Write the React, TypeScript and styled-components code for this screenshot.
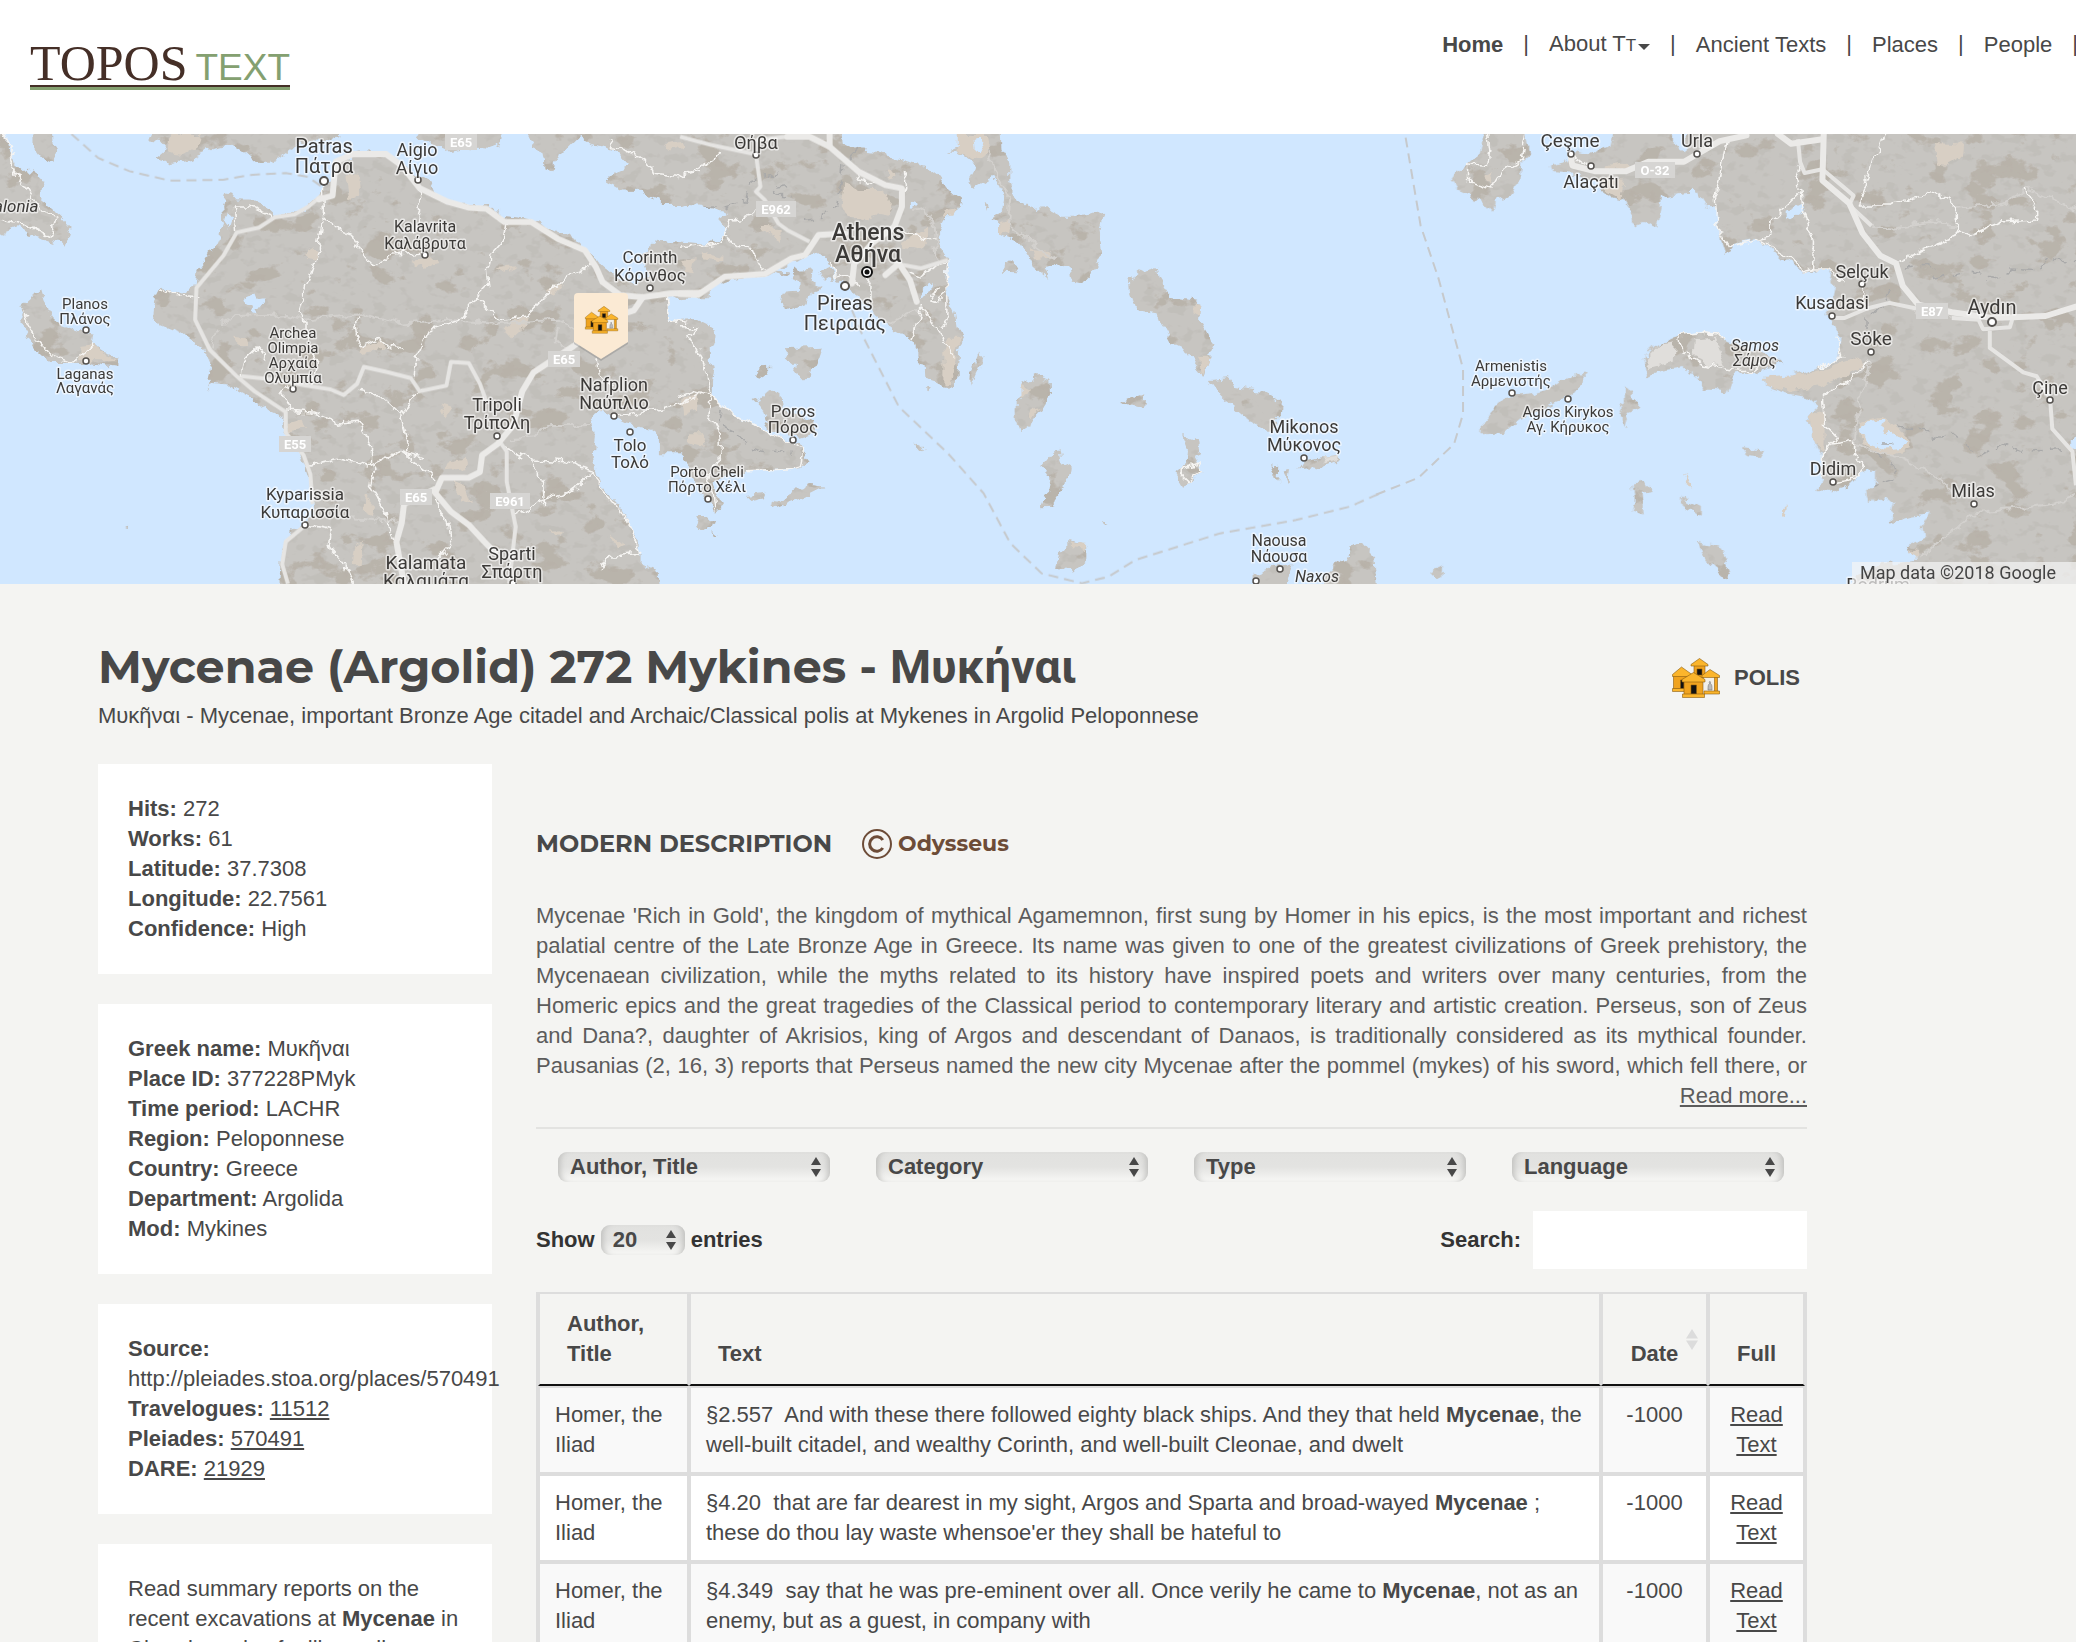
import React from "react";
import styled, { createGlobalStyle, css } from "styled-components";

const sans = `"Liberation Sans", Arial, Helvetica, sans-serif`;
const display = `Montserrat, Inter, "Liberation Sans", sans-serif`;
const ink = "#484848";

const GlobalStyle = createGlobalStyle`
  *, *::before, *::after { box-sizing: border-box; }
  body {
    margin: 0;
    background: #f4f4f2;
    color: ${ink};
    font: 22px/30px ${sans};
    overflow-x: hidden;
  }
  a { color: inherit; }
`;

/* ---------- header ---------- */

const Header = styled.header`
  display: flex;
  justify-content: space-between;
  align-items: flex-start;
  height: 134px;
  padding-left: 30px;
  background: #fff;
`;

const Logo = styled.a`
  display: flex;
  align-items: baseline;
  justify-content: space-between;
  width: 260px;
  height: 50px;
  margin-top: 40px;
  border-bottom: 3px solid #84a070;
  box-shadow: inset 0 -2px 0 #452f27;
  text-decoration: none;
  white-space: nowrap;
`;

const LogoTopos = styled.span`
  color: #452f27;
  font: 50px/46px "Liberation Serif", "Times New Roman", serif;
`;

const LogoText = styled.span`
  color: #84a070;
  font: 37px/40px ${sans};
`;

const Nav = styled.nav`
  display: flex;
  flex: none;
  gap: 20px;
  margin-right: -2px;
  padding-top: 29px;
  white-space: nowrap;
`;

const NavLink = styled.a<{ $active?: boolean }>`
  display: inline-flex;
  align-items: center;
  gap: 2px;
  color: ${ink};
  font-weight: ${(p) => (p.$active ? 700 : 400)};
  text-decoration: none;
`;

const Small = styled.span`
  font-size: 17px;
`;

const Caret = styled.span`
  border: 6px solid transparent;
  border-top-color: ${ink};
  border-bottom: 0;
  margin-top: 4px;
`;

/* ---------- map ---------- */

const MapBox = styled.section`
  position: relative;
  height: 450px;
  overflow: hidden;
  background: #d0e7ff;
`;

const MapDrawing = styled.svg`
  display: block;
  width: 100%;
  height: 100%;
`;

const MapCredit = styled.div`
  position: absolute;
  right: 0;
  bottom: 0;
  padding: 0 20px 0 8px;
  background: rgba(245, 245, 245, 0.7);
  color: #444;
  font: 18px/22px Roboto, sans-serif;
`;

/* ---------- page ---------- */

const Page = styled.main`
  max-width: 1807px;
  padding: 56px 0 60px 98px;
`;

const TitleRow = styled.div`
  display: flex;
  justify-content: space-between;
  align-items: flex-start;
  margin-bottom: 33px;
`;

const Title = styled.h1`
  margin: 0 0 7px;
  font: 700 46px/54px ${display};
`;

const GreekTitle = styled.span`
  font-family: Roboto, sans-serif;
  font-size: 47px;
`;

const Subtitle = styled.p`
  margin: 0;
`;

const Kind = styled.div`
  display: flex;
  align-items: center;
  gap: 14px;
  padding: 18px 7px 0 0;
  font-weight: 700;
`;

const Columns = styled.div`
  display: grid;
  grid-template-columns: 394px minmax(0, 1fr);
  gap: 44px;
`;

const Sidebar = styled.aside`
  display: flex;
  flex-direction: column;
  gap: 30px;
`;

const Card = styled.section`
  padding: 30px;
  background: #fff;
`;

const Fact = styled.div``;

const Content = styled.section`
  padding-top: 60px;
`;

const Heading = styled.h2`
  display: flex;
  align-items: center;
  gap: 30px;
  margin: 0 0 37px;
  font: 700 24px/40px ${display};
`;

const Credit = styled.a`
  display: flex;
  align-items: center;
  gap: 6px;
  color: #6d4c38;
  font-size: 22px;
  text-decoration: none;
`;

const Description = styled.p`
  margin: 0;
  color: #5c5c5c;
  text-align: justify;
  text-align-last: justify;
`;

const MoreLine = styled.div`
  padding-bottom: 16px;
  border-bottom: 2px solid #e3e3e1;
  color: #5c5c5c;
  text-align: right;
`;

const DescriptionLine = styled.span`
  display: block;
`;

const Filters = styled.div`
  display: grid;
  grid-template-columns: repeat(4, 1fr);
  gap: 46px;
  padding: 23px 23px 29px 22px;
`;

const SelectWrap = styled.span<{ $narrow?: boolean }>`
  position: relative;
  display: block;
  ${(p) => p.$narrow && css`width: 84px;`}
  svg {
    position: absolute;
    top: 5px;
    right: 9px;
    pointer-events: none;
  }
`;

const Select = styled.select`
  appearance: none;
  display: block;
  width: 100%;
  height: 30px;
  padding: 0 24px 0 12px;
  border: 0;
  border-radius: 9px;
  background: linear-gradient(#e1e1df 0, #e3e3e1 50%, #f4f4f2 90%);
  box-shadow: inset 7px 0 6px -5px #bdbdbb, inset -7px 0 6px -5px #bdbdbb;
  color: ${ink};
  font: 700 22px/28px ${sans};
`;

const Tools = styled.div`
  display: flex;
  justify-content: space-between;
  align-items: center;
  margin-bottom: 23px;
  color: #333;
  font-weight: 700;
`;

const ToolLabel = styled.label<{ $gap: number }>`
  display: flex;
  align-items: center;
  gap: ${(p) => p.$gap}px;
`;

const SearchInput = styled.input`
  width: 274px;
  height: 58px;
  padding: 0 15px;
  border: 0;
  background: #fff;
  color: ${ink};
  font: inherit;
`;

const Table = styled.table`
  width: 100%;
  table-layout: fixed;
  border: 2px solid #ddd;
  border-collapse: separate;
  border-spacing: 0;
`;

const Col = styled.col<{ $width?: number }>`
  ${(p) => p.$width && css`width: ${p.$width}px;`}
`;

const Th = styled.th<{ $center?: boolean }>`
  position: relative;
  padding: 15px ${(p) => (p.$center ? 15 : 27)}px;
  border: 2px solid #ddd;
  border-top: 0;
  border-bottom-color: #111;
  text-align: ${(p) => (p.$center ? "center" : "left")};
  vertical-align: bottom;
  svg {
    position: absolute;
    top: 35px;
    right: 8px;
  }
`;

const Td = styled.td<{ $center?: boolean }>`
  padding: 12px ${(p) => (p.$center ? 12 : 15)}px;
  border: 2px solid #ddd;
  text-align: ${(p) => (p.$center ? "center" : "left")};
  vertical-align: top;
`;

const Row = styled.tr`
  background: #fff;
  &:nth-child(odd) { background: #f9f9f9; }
`;

/* ---------- icons ---------- */

function CityShapes() {
  return (
    <g stroke="#8a5c10" strokeWidth="0.6" strokeLinejoin="round">
      <path d="M22 7H33V20H22Z" fill="#f0a31f" />
      <path d="M27.500 0.500L36 6.500V8H19V6.500Z" fill="#fbb52c" />
      <path d="M25 11H30V17H25Z" fill="#111" />
      <path d="M1.500 17H18V31H1.500Z" fill="#f0a31f" />
      <path d="M9.500 9L20 16.500V18.500H0.500V16.500Z" fill="#fbb52c" />
      <path d="M8.500 22H12V31H8.500Z" fill="#111" />
      <path d="M0.500 30.500H13V33.500H0.500Z" fill="#fbb52c" />
      <path d="M32 19H46V34H32Z" fill="#f2f0ea" stroke="none" />
      <path d="M36 32C36 28 36 27 37.500 25.500C36.500 23 39 22.500 38.500 25.500C40 27 40 28 40 32Z" fill="#bbb" stroke="#777" />
      <path d="M42.500 19H45.500V34H42.500Z" fill="#f0a31f" />
      <path d="M38 11.500L47.500 17.500V19.500H30V17.500Z" fill="#fbb52c" />
      <path d="M32 33H47.500V36H32Z" fill="#fbb52c" />
      <path d="M12 22H31V36.500H12Z" fill="#f0a31f" />
      <path d="M21.500 14.500L33 21.500V24H10V21.500Z" fill="#fbb52c" />
      <path d="M19 27H24.500V36H19Z" fill="#111" />
      <path d="M10.500 36H32.500V39.500H10.500Z" fill="#fbb52c" />
    </g>
  );
}

const UpDown = () => (
  <svg width="10" height="20" viewBox="0 0 10 20" fill={ink} aria-hidden="true">
    <path d="M5 0L10 8H0ZM0 12H10L5 20Z" />
  </svg>
);

const SortIcon = () => (
  <svg width="12" height="21" viewBox="0 0 12 21" fill="#dcdcdc" aria-hidden="true">
    <path d="M6 0L12 9.500H0ZM0 11.500H12L6 21Z" />
  </svg>
);

/* ---------- map data ---------- */

const WEST = "matrix(0.4464 0 0 0.3762 0 -134)";
const MIDDLE = "matrix(0.4464 0 0 0.3333 680 -14)";
const EAST = "matrix(0.4464 0 0 0.3762 1376 -134)";

type Region = { at: string; paths: string[] };

const land: Region[] = [
  {
    at: WEST,
    paths: [
      "M-20 340L10 356 18 380 28 430 60 465 72 450 95 490 90 530 130 570 158 605 145 655 120 645 80 630 40 605 -20 630Z",
      "M75 340L118 340 120 385 128 400 115 430 95 420 75 385Z",
      "M340 340L760 340 765 362 740 378 690 372 655 390 640 405 605 430 575 430 550 405 520 385 480 395 430 420 380 432 350 420 375 395 360 375 330 370Z",
      "M930 340L1130 340 1120 385 1090 398 1040 392 1000 400 970 385 940 370Z",
      "M1175 340L1590 340 1590 545 1500 540 1440 510 1400 510 1355 480 1380 455 1410 440 1380 400 1320 380 1300 365 1275 395 1250 410 1240 450 1220 445 1215 400 1195 390Z",
      "M45 850L55 810 90 772 98 800 130 860 190 885 215 890 210 915 265 955 265 975 200 965 110 965 80 930 50 870Z",
      "M505 512L520 515 530 530 565 530 590 545 620 575 660 568 690 550 715 520 728 490 745 470 748 440 770 415 830 405 870 410 900 430 925 460 960 480 975 515 1000 540 1050 545 1100 545 1130 575 1190 582 1230 605 1290 635 1330 680 1345 705 1380 740 1430 755 1450 730 1435 680 1480 635 1590 650 1590 790 1495 790 1500 855 1590 862 1590 1205 1510 1200 1495 1170 1460 1140 1400 1125 1375 1110 1340 1090 1325 1110 1335 1160 1330 1210 1340 1260 1350 1300 1390 1350 1410 1400 1435 1440 1435 1500 1470 1520 1475 1570 625 1570 630 1460 650 1420 680 1395 705 1370 700 1300 685 1240 665 1190 635 1150 640 1110 600 1090 550 1050 510 1025 470 1020 462 1040 475 980 455 930 400 880 340 850 345 800 360 765 385 785 440 765 445 720 470 680 485 640 500 590 498 540Z",
      "M275 1398L285 1395 287 1401Z",
    ],
  },
  {
    at: MIDDLE,
    paths: [
      "M-45 20L360 20 365 70 395 90 440 95 480 115 550 140 580 170 600 205 630 240 620 270 590 300 575 340 580 380 600 420 595 470 600 530 615 575 620 620 637 655 625 700 620 790 600 800 550 780 548 735 530 720 520 660 480 630 440 590 430 560 395 530 380 500 350 480 340 440 325 410 300 395 270 420 230 440 190 470 160 468 110 480 70 500 40 530 0 535 -45 525 -45 385 0 385 50 375 100 350 110 330 85 300 110 280 60 262 45 230 0 255 -45 255Z",
      "M260 450L300 445 295 490 320 500 290 520 285 550 250 568 222 545 225 518 265 515 275 490 250 480Z",
      "M195 450L250 455 240 465Z M315 450L335 440 345 480 320 475Z",
      "M232 685L318 680 310 710 300 740 292 770 270 772 258 750 262 735 240 710Z",
      "M172 770L180 742 200 740 200 760 185 775Z",
      "M-45 605L0 602 40 600 70 620 82 650 75 680 50 690 55 720 78 740 72 780 70 830 100 860 140 900 200 940 250 965 270 970 275 1000 290 1025 270 1045 200 1050 150 1055 110 1060 75 1090 95 1165 75 1172 60 1130 40 1100 20 1060 20 1030 0 1000 -45 1000Z",
      "M165 840L205 815 225 825 228 870 300 905 305 935 270 950 200 930 185 870Z",
      "M32 1188L60 1188 75 1210 70 1230 45 1220Z M70 1235L82 1248 76 1248Z",
      "M200 1165L240 1120 290 1095 325 1100 280 1130 240 1150 205 1168Z M150 1125L195 1118 190 1135 165 1142Z",
      "M620 20L718 20 720 90 740 130 740 190 755 240 790 270 820 268 850 290 900 290 948 278 940 330 945 400 935 440 905 490 880 485 875 440 850 430 830 440 815 445 825 480 790 440 780 400 755 360 715 345 715 310 700 300 725 270 730 230 700 170 660 200 648 190 665 150 650 120 620 95 600 95 625 80Z",
      "M728 458L732 430 745 418 758 440 750 460Z M680 250L692 252 685 275Z M548 798L562 798 556 808Z",
      "M670 695L678 715 660 770 650 803 652 760Z",
      "M770 790L800 768 832 780 833 820 815 860 790 905 760 933 752 900 752 850 765 830Z",
      "M850 980L855 1025 880 1045 878 1070 860 1080 855 1110 830 1160 810 1162 825 1110 830 1070 812 1040 830 1010Z",
      "M850 1300L880 1260 910 1275 910 1325 885 1355 860 1345 840 1345Z",
      "M1008 480L1035 455 1068 443 1072 475 1098 530 1168 545 1165 600 1182 640 1195 680 1172 768 1150 730 1130 685 1105 670 1085 620 1065 580 1022 570 1010 520Z",
      "M1183 780L1230 775 1240 800 1310 815 1350 850 1348 890 1320 930 1270 900 1210 830Z",
      "M988 848L1040 820 1038 860 1010 855Z",
      "M1125 945L1160 960 1165 1000 1155 1030 1170 1060 1150 1082 1125 1095 1110 1060 1135 1030 1138 990Z",
      "M1385 1048L1400 1020 1470 1005 1478 1022 1430 1050 1410 1045Z M1320 1030L1340 1042 1338 1085 1330 1060Z M1350 1055L1365 1050 1360 1085Z",
      "M1430 1410L1460 1345 1490 1320 1500 1285 1525 1265 1555 1310 1562 1410Z",
      "M1285 1410L1285 1360 1330 1335 1370 1330 1365 1360 1355 1410Z",
      "M525 970L545 985 550 1000 535 988Z M945 1208L958 1210 948 1214Z",
    ],
  },
  {
    at: EAST,
    paths: [
      "M245 340L335 340 345 410 325 430 320 490 310 515 270 530 262 568 235 535 185 510 170 480 185 450 235 410Z",
      "M535 340L665 340 665 380 690 400 700 340 1600 340 1600 1570 1070 1570 1075 1530 1130 1500 1215 1490 1190 1450 1230 1430 1225 1400 1240 1365 1200 1370 1150 1390 1160 1340 1140 1320 1105 1340 1100 1300 1120 1280 1120 1245 1085 1260 1060 1290 1020 1310 985 1305 1000 1270 1000 1210 985 1180 970 1110 990 1080 965 1055 920 1045 872 1025 870 1005 930 1000 1000 975 1040 950 1045 900 1025 870 1010 830 1025 800 1030 760 1010 715 960 722 910 690 880 655 850 635 800 650 785 675 780 655 765 600 760 555 740 550 720 510 700 510 638 520 635 560 625 608 600 590 575 600 570 560 555 530 530 525 490 490 450 465 395 460 392 440 430 430 450 400 485 410 525 390Z",
      "M600 950L635 910 700 885 760 885 790 910 880 940 905 965 860 985 800 1000 785 1040 740 1035 720 1000 690 975 640 985 610 1003Z",
      "M238 1155L240 1120 290 1055 350 1048 400 1030 430 1005 470 995 455 1035 420 1060 350 1100 320 1115 290 1150Z",
      "M560 1030L575 1040 575 1062 595 1075 575 1085 565 1110 560 1138 550 1100 545 1080 560 1070Z",
      "M820 1188L865 1195 855 1215 830 1212Z M575 1285L600 1280 620 1310 595 1315 600 1370 575 1360 580 1330Z",
      "M685 1325L730 1350 730 1368 690 1350Z M720 1440L775 1455 795 1520 780 1535 740 1490Z M118 1520L150 1505 148 1538Z",
    ],
  },
];

const sand: Region[] = [
  {
    at: WEST,
    paths: [
      "M775 460L800 465 805 520 785 530Z M385 356L450 356 445 390 410 415 375 410Z M690 655L712 665 705 690 685 685Z M525 895L555 900 560 920 530 920Z",
      "M925 690L980 685 985 700 930 710Z M1150 850L1185 840 1180 860 1145 900 1130 880Z M1110 710L1155 705 1130 725Z M808 920L860 905 860 930 815 938Z",
      "M985 1075L1015 1085 1000 1110Z M650 1120L680 1110 685 1140 645 1150Z M1005 1230L1040 1220 1045 1245 1000 1250Z M1020 1280L1040 1290 1055 1340 1030 1330Z",
      "M795 1450L815 1440 810 1500 790 1500Z M1230 1410L1260 1410 1245 1425Z M1370 1420L1400 1450 1385 1460Z M820 1315L838 1340 830 1370 815 1360Z M1530 1060L1560 1045 1560 1090 1535 1100Z M180 960L180 920 210 915 260 960Z M1225 770L1260 750 1240 785Z M1490 380L1530 375 1535 390 1500 400Z",
    ],
  },
  {
    at: MIDDLE,
    paths: [
      "M368 195L400 210 455 210 475 260 470 290 450 285 415 300 375 290 362 255Z M468 140L483 165 475 180 465 175Z M180 320L230 325 230 370 205 350Z M50 395L95 410 95 425 55 415Z",
      "M500 365L535 340 560 320 560 360 540 390 500 380Z M595 270L620 265 610 290 592 290Z M600 650L630 650 615 715 605 790 590 790 590 700Z",
      "M620 42L690 42 695 90 660 120 620 95Z M790 385L830 390 830 410 795 415Z M715 310L740 300 735 340 715 345Z M765 795L785 810 765 825Z M780 870L805 865 790 895Z",
      "M1150 545L1168 545 1165 590 1150 580Z M1160 710L1188 710 1170 765Z M20 940L55 940 50 980 20 970Z M10 830L40 835 25 875Z M10 420L35 415 30 460 10 455Z M880 1265L910 1272 905 1290 880 1285Z",
    ],
  },
  {
    at: EAST,
    paths: [
      "M1255 380L1315 385 1312 420 1275 443 1258 440Z M515 440L560 430 575 445 525 455Z M500 470L555 475 550 530 520 510Z",
      "M1090 945L1095 970 1050 1000 990 1025 920 1040 872 1025 870 1005 960 995 1040 965Z M985 1090L1005 1100 1005 1200 985 1180 970 1110Z",
      "M1085 1120L1130 1105 1195 1160 1190 1195 1150 1210 1090 1180Z",
      "M690 1255L713 1290 700 1290Z M912 1350L920 1350 918 1372 912 1368Z M240 465L258 455 262 490 245 485Z M1195 1460L1215 1465 1210 1490Z",
    ],
  },
];

const bareHills: Region[] = [
  { at: EAST, paths: ["M605 950L640 912 670 908 667 960 612 978Z M710 900L755 895 782 972 745 972 708 940Z"] },
  { at: MIDDLE, paths: ["M1440 1012L1474 1006 1472 1022 1445 1030Z"] },
];

const lakes: Region[] = [
  { at: WEST, paths: ["M550 790L570 780 575 795 595 790 590 810 570 815 575 835 558 832 560 810 545 800Z M510 560L522 575 512 610 502 600Z"] },
  { at: MIDDLE, paths: ["M660 60L672 55 676 80 662 90Z M545 510L570 485 560 515 535 535Z M515 245L528 250 515 268Z"] },
  { at: EAST, paths: ["M1085 1140L1100 1120 1135 1115 1130 1135 1160 1160 1190 1170 1180 1188 1140 1192 1100 1175Z M920 560L955 540 960 560 920 585Z M1555 1180L1575 1160 1575 1200Z"] },
];

const motorways: Region[] = [
  {
    at: WEST,
    paths: [
      "M715 530L745 520 752 430 790 410 865 410 900 440 940 500 1000 535 1050 552 1090 555 1130 590 1190 590 1250 635 1310 665 1335 710 1350 750 1390 785 1440 790 1500 780 1568 778",
      "M1440 790L1420 825 1380 840 1285 920 1195 990 1170 1040 1150 1130 1115 1180 1080 1210 1075 1255 1050 1270 990 1270 975 1310 1010 1360 1050 1395 1085 1440 1110 1470",
      "M975 1300L905 1340 900 1390 888 1440 905 1552",
    ],
  },
  {
    at: MIDDLE,
    paths: [
      "M240 50L290 50 335 80 400 155 460 195 497 205 497 260 480 320 430 370 390 430 385 490",
      "M0 522L40 525 100 470 190 462 250 415 280 405 310 345 370 340",
      "M460 465L490 430 515 480 530 545",
      "M335 42L335 80",
    ],
  },
  {
    at: EAST,
    paths: [
      "M435 410L440 440 490 455 560 455 610 430 690 430 770 375 830 360",
      "M1003 356L1000 480 1060 540 1090 620 1130 680 1165 700 1180 760 1215 810 1290 830 1380 845 1500 840 1568 815",
      "M900 356L930 382 1000 370",
    ],
  },
];

const roads: Region[] = [
  {
    at: WEST,
    paths: [
      "M720 520L690 550 660 570 615 578 580 605 530 618 500 680 440 765 437 850 470 930 530 1000 570 1040 640 1095 640 1150 680 1210 695 1260 700 1340",
      "M540 1000L620 1010 660 1020 740 1035 770 1050 800 1020 815 975 870 990 920 1005 940 1040 1000 1025 1010 962 1050 965 1075 1020 1090 1070",
      "M685 1395L640 1440 632 1500 645 1552",
      "M1120 1175L1135 1200 1135 1280 1155 1400 1140 1552",
    ],
  },
  {
    at: MIDDLE,
    paths: [
      "M0 50L70 75 170 103 180 200 170 215 190 240 220 310 240 330 290 365",
      "M170 60L240 50 M480 430L540 445 600 420",
    ],
  },
  {
    at: EAST,
    paths: [
      "M1022 845L1050 845 1100 820 1150 805 1210 820 M1290 845L1350 850 1360 875 1420 870 1425 850",
      "M1375 880L1375 925 1450 990 1480 1000 1510 1060 1515 1140 1560 1200 1568 1290",
      "M945 370L950 430 960 460 1000 450 1070 520 1060 545 1110 600",
    ],
  },
];

const lanes: Region[] = [
  {
    at: WEST,
    paths: [
      "M722 490L725 580 715 660 690 750 670 830 690 860 690 910 710 960 700 1030",
      "M720 580L745 600 760 615 785 625 800 655 820 690 840 705 870 680 950 670 M935 480L940 560 930 620",
      "M1135 590L1130 640 1100 680 1092 720 1095 760 1070 790 1050 820 1030 850 960 880 935 940 930 1000",
      "M640 1090L700 1095 760 1125 800 1120 830 1180 830 1240 760 1220 690 1240 M660 1020L630 1045 650 1090",
      "M800 1040L850 1050 895 1100 920 1060 945 1035 M895 1100L910 1160 915 1220 960 1260 975 1280",
      "M830 1240L900 1200 950 1220 M1330 1250L1290 1300 1220 1330 1150 1370",
      "M1135 1190L1190 1220 1270 1225 1330 1250 1350 1305 1390 1360 1430 1440 1438 1470 1360 1480 1340 1520 M1330 700L1260 740 1180 840 1120 850 1070 790",
      "M1190 1220L1215 1280 1220 1340 M840 1240L830 1290 865 1360 870 1400 890 1450 M975 1320L1000 1390 1010 1450 980 1490",
      "M525 550L560 550 615 578 M525 550L530 618 M360 770L385 785 440 788 M0 580L60 600 115 630 125 580 90 560 60 500 20 430 30 400 10 356",
      "M65 840L55 830 60 860 80 900 110 940 160 965 200 930 215 912 M1335 950L1340 990 1370 1020 M700 1340L680 1395 740 1410 735 1450 770 1500 790 1552",
      "M800 840L795 870 805 920 850 900 870 920 900 925 M540 1000L545 960 575 925 600 960 M1375 1110L1480 1085 1530 1070 1568 1045 M1495 790L1500 850 1540 860",
      "M1365 370L1370 390 1400 395 1460 440 1465 460 1520 470 1568 455",
    ],
  },
  {
    at: MIDDLE,
    paths: [
      "M0 170L20 160 60 130 90 90 M0 385L80 370 100 350 115 300 160 290 170 262 M100 350L130 380 155 380 185 440",
      "M500 145L508 200 500 225 M395 160L400 180 440 190 M500 330L545 360 570 350 M340 420L345 470 370 460 400 500 M510 450L545 470 580 430 600 420 595 520 570 550 560 545 580 500",
      "M540 560L520 660 M540 560L570 620 605 690 612 710 M600 530L600 590 585 630 M410 460L430 500 430 560",
      "M0 620L35 620 20 650 50 720 60 780 70 830 130 890 200 940 275 985 270 1040 240 1050 150 1055 M0 830L30 815 70 830 65 880 90 950 90 1030 60 1060 75 1120 78 1170",
      "M1125 1045L1160 1032 1168 1060 1140 1085 1125 1065Z",
    ],
  },
  {
    at: EAST,
    paths: [
      "M785 370L765 500 758 530 762 600 790 655 860 637 920 680 960 720 978 715 980 640 955 560 950 510 940 470 950 440 M950 515L890 580 880 630 860 637",
      "M1140 356L1130 390 1110 430 1085 545 1150 545 1260 510 1300 550 1300 610 1330 625 1400 590 1480 585 1480 550 1455 500",
      "M1300 610L1300 630 1200 680 1165 700 M1105 960L1060 1010 1000 1055 1005 1130 1030 1160 1020 1180 1070 1170 1070 1200 1090 1240 1080 1270 1030 1280 M1020 1180L1000 1210 1000 1270",
      "M250 356L255 400 250 440 205 435 205 480 260 500 280 460 325 425 335 356 M435 410L470 440 490 455",
      "M680 890L685 930 730 970 780 980 840 990 860 970 M680 890L720 882 760 888 785 905 M975 715L1010 715 1045 750 M1035 895L1045 945 990 980 M1088 755L1085 800 1100 820",
    ],
  },
];

const faintRoads: Region[] = [
  { at: WEST, paths: ["M495 860L530 840 640 835 680 850 810 835 900 860 1000 850 1100 860 1250 850 1290 880 M490 870L475 930 M1140 1170L1200 1165 1230 1130 1330 1130 M730 1370L900 1390 M1250 870L1245 910 1290 950"] },
  { at: MIDDLE, paths: ["M690 90L710 180 740 230 735 310 790 370 840 415 M520 270L550 260 568 310 575 420 M460 610L540 560"] },
  { at: EAST, paths: ["M1105 600L1160 605 1240 590 1300 600 M1300 550L1400 540 1460 500 1568 555 M1105 960L1085 1060 1070 1190 M1070 1180L1160 1210 1250 1260 1300 1310 M1568 1320L1520 1340 1340 1365 1290 1410 1220 1480 M1380 845L1200 830"] },
];

const borders: Region[] = [
  { at: MIDDLE, paths: ["M395 90L365 130 362 190 350 260 325 260 320 295 280 300 275 275 M215 160L160 185 150 240 100 260 60 262 M240 200L205 205 215 225 250 230 M90 870L85 910 130 940 150 975 180 990 250 1000"] },
  { at: EAST, paths: ["M1180 710L1240 705 1250 740 1320 725 1400 740 1420 715 1480 720 1500 690 1568 695 M1170 1135L1240 1145 1250 1165 1290 1150 1330 1190 1350 1215 1410 1180 1450 1200 1540 1195 M1120 1195L1160 1240 1165 1270 1110 1290 M1130 1180L1165 1180 M1150 770L1140 810 1100 840 1100 880"] },
];

const ferries: Region[] = [
  { at: WEST, paths: ["M160 356L220 420 290 455 380 480 500 478 560 465 640 460 690 470 725 500"] },
  { at: MIDDLE, paths: ["M385 570L410 650 490 860 600 1000 680 1120 740 1270 810 1360 900 1390 960 1370 1020 1320 1210 1240 1380 1200 1500 1160 1568 1120"] },
  { at: EAST, paths: ["M0 1315L95 1270 175 1180 195 1100 195 980 140 740 100 600 65 356"] },
];

type Place = { x: number; ys: number[]; size: number; lines: string[]; dot?: [number, number]; italic?: boolean; big?: boolean };

const places: Place[] = [
  { x: 324, ys: [12, 32], size: 20, lines: ["Patras", "Πάτρα"], dot: [324, 47], big: true },
  { x: 417, ys: [15, 33], size: 18, lines: ["Aigio", "Αίγιο"], dot: [418, 46] },
  { x: 425, ys: [92, 109], size: 16, lines: ["Kalavrita", "Καλάβρυτα"], dot: [425, 121] },
  { x: 650, ys: [123, 141], size: 17, lines: ["Corinth", "Κόρινθος"], dot: [650, 154] },
  { x: 4, ys: [72], size: 17, lines: ["Kefalonia"], italic: true },
  { x: 85, ys: [170, 185], size: 15, lines: ["Planos", "Πλάνος"], dot: [86, 196] },
  { x: 85, ys: [240, 254], size: 15, lines: ["Laganas", "Λαγανάς"], dot: [86, 227] },
  { x: 293, ys: [199, 214, 229, 244], size: 15, lines: ["Archea", "Olimpia", "Αρχαία", "Ολυμπία"], dot: [293, 255] },
  { x: 614, ys: [250, 268], size: 18, lines: ["Nafplion", "Ναύπλιο"], dot: [614, 282] },
  { x: 497, ys: [270, 288], size: 18, lines: ["Tripoli", "Τρίπολη"], dot: [497, 302] },
  { x: 630, ys: [311, 328], size: 17, lines: ["Tolo", "Τολό"], dot: [630, 298] },
  { x: 305, ys: [360, 378], size: 17, lines: ["Kyparissia", "Κυπαρισσία"], dot: [305, 391] },
  { x: 426, ys: [428, 446], size: 19, lines: ["Kalamata", "Καλαμάτα"] },
  { x: 512, ys: [419, 437], size: 18, lines: ["Sparti", "Σπάρτη"], dot: [513, 449] },
  { x: 707, ys: [338, 353], size: 15, lines: ["Porto Cheli", "Πόρτο Χέλι"], dot: [708, 365] },
  { x: 793, ys: [277, 293], size: 17, lines: ["Poros", "Πόρος"], dot: [793, 306] },
  { x: 756, ys: [8], size: 18, lines: ["Θήβα"], dot: [756, 21] },
  { x: 868, ys: [98, 120], size: 23, lines: ["Athens", "Αθήνα"] },
  { x: 845, ys: [169, 189], size: 20, lines: ["Pireas", "Πειραιάς"], dot: [845, 152], big: true },
  { x: 1304, ys: [292, 310], size: 18, lines: ["Mikonos", "Μύκονος"], dot: [1304, 324] },
  { x: 1279, ys: [406, 422], size: 16, lines: ["Naousa", "Νάουσα"], dot: [1280, 435] },
  { x: 1317, ys: [442], size: 16, lines: ["Naxos"], dot: [1256, 447], italic: true },
  { x: 1570, ys: [6], size: 19, lines: ["Çeşme"], dot: [1571, 20] },
  { x: 1697, ys: [6], size: 18, lines: ["Urla"], dot: [1697, 20] },
  { x: 1591, ys: [47], size: 18, lines: ["Alaçatı"], dot: [1591, 32] },
  { x: 1862, ys: [137], size: 18, lines: ["Selçuk"], dot: [1862, 150] },
  { x: 1832, ys: [168], size: 18, lines: ["Kusadasi"], dot: [1832, 182] },
  { x: 1992, ys: [173], size: 20, lines: ["Aydın"], dot: [1992, 188], big: true },
  { x: 1871, ys: [204], size: 19, lines: ["Söke"], dot: [1871, 218] },
  { x: 2050, ys: [253], size: 18, lines: ["Çine"], dot: [2050, 266] },
  { x: 1755, ys: [211, 226], size: 16, lines: ["Samos", "Σάμος"], italic: true },
  { x: 1511, ys: [232, 247], size: 15, lines: ["Armenistis", "Αρμενιστής"], dot: [1512, 259] },
  { x: 1568, ys: [278, 293], size: 15, lines: ["Agios Kirykos", "Αγ. Κήρυκος"], dot: [1568, 265] },
  { x: 1833, ys: [334], size: 18, lines: ["Didim"], dot: [1833, 348] },
  { x: 1973, ys: [356], size: 18, lines: ["Milas"], dot: [1974, 370] },
  { x: 1878, ys: [450], size: 18, lines: ["Bodrum"] },
];

const shields: [string, number, number][] = [
  ["E65", 461, 8], ["E55", 295, 310], ["E65", 564, 225], ["E65", 416, 363], ["E961", 510, 367],
  ["E962", 776, 75], ["O-32", 1655, 36], ["E87", 1932, 177],
];

const Layer = ({ regions }: { regions: Region[] }) => (
  <>
    {regions.map((r, i) => (
      <g key={i} transform={r.at}>
        {r.paths.map((d) => <path key={d} d={d} vectorEffect="non-scaling-stroke" />)}
      </g>
    ))}
  </>
);

const PlaceName = styled.text`
  fill: #3c3a38;
  stroke: rgba(255, 255, 255, 0.6);
  stroke-width: 3px;
  stroke-linejoin: round;
  paint-order: stroke;
  text-anchor: middle;
  dominant-baseline: central;
  font-family: Roboto, sans-serif;
`;

const ShieldName = styled.text`
  fill: #fff;
  text-anchor: middle;
  dominant-baseline: central;
  font: 700 13px Roboto, sans-serif;
`;

function AegeanMap() {
  return (
    <MapDrawing viewBox="0 0 2076 450" preserveAspectRatio="xMidYMid slice" role="img" aria-label="Map of the Peloponnese and the Aegean">
      <defs>
        <filter id="terrain" filterUnits="userSpaceOnUse" x="0" y="0" width="2076" height="450" colorInterpolationFilters="sRGB">
          <feTurbulence type="fractalNoise" baseFrequency="0.09" numOctaves="3" seed="4" result="edge" />
          <feDisplacementMap in="SourceGraphic" in2="edge" scale="11" xChannelSelector="R" yChannelSelector="G" result="coast" />
          <feTurbulence type="fractalNoise" baseFrequency="0.03 0.04" numOctaves="5" seed="11" result="hills" />
          <feColorMatrix in="hills" values="0 0 0 0 0.7  0 0 0 0 0.665  0 0 0 0 0.625  14 0 0 0 -8.3" result="brown" />
          <feComponentTransfer in="brown" result="soft"><feFuncA type="linear" slope="0.65" /></feComponentTransfer>
          <feTurbulence type="fractalNoise" baseFrequency="0.07 0.1" numOctaves="3" seed="23" result="ridges" />
          <feColorMatrix in="ridges" values="0 0 0 0 0.72  0 0 0 0 0.71  0 0 0 0 0.69  0 9 0 0 -5" result="grey" />
          <feComponentTransfer in="grey" result="faint"><feFuncA type="linear" slope="0.35" /></feComponentTransfer>
          <feMerge result="relief"><feMergeNode in="faint" /><feMergeNode in="soft" /></feMerge>
          <feComposite in="relief" in2="coast" operator="in" result="onLand" />
          <feMerge><feMergeNode in="coast" /><feMergeNode in="onLand" /></feMerge>
        </filter>
        <filter id="rough" filterUnits="userSpaceOnUse" x="0" y="0" width="2076" height="450" colorInterpolationFilters="sRGB">
          <feTurbulence type="fractalNoise" baseFrequency="0.09" numOctaves="3" seed="4" result="edge" />
          <feDisplacementMap in="SourceGraphic" in2="edge" scale="11" xChannelSelector="R" yChannelSelector="G" />
        </filter>
      </defs>
      <rect width="2076" height="450" fill="#d0e7ff" />
      <g fill="#c7c5c1" filter="url(#terrain)"><Layer regions={land} /></g>
      <g filter="url(#rough)">
        <g fill="#d8cfc4"><Layer regions={sand} /></g>
        <g fill="#e0dedb"><Layer regions={bareHills} /></g>
        <g fill="#d0e7ff"><Layer regions={lakes} /></g>
        <g fill="none" stroke="#a9a9a9" strokeWidth="1.5" strokeDasharray="12 7"><Layer regions={borders} /></g>
        <g fill="none" stroke="#d3d1ce" strokeWidth="2"><Layer regions={faintRoads} /></g>
        <g fill="none" stroke="#f6f5f3" strokeWidth="1.5" strokeLinejoin="round"><Layer regions={lanes} /></g>
      </g>
      <g fill="none" stroke="#e6e5e3" strokeWidth="4" strokeLinejoin="round"><Layer regions={roads} /></g>
      <g fill="none" stroke="#ebeae8" strokeWidth="6" strokeLinejoin="round" strokeLinecap="round"><Layer regions={motorways} /></g>
      <g fill="none" stroke="#c6c9cc" strokeWidth="2" strokeDasharray="10 6"><Layer regions={ferries} /></g>
      {shields.map(([name, x, y]) => (
        <g key={name + x}>
          <rect x={x - name.length * 4 - 4} y={y - 8} width={name.length * 8 + 8} height="16" fill="#d6d5d3" />
          <ShieldName x={x} y={y}>{name}</ShieldName>
        </g>
      ))}
      {places.map((p) => (
        <g key={p.lines[0]}>
          {p.dot && <circle cx={p.dot[0]} cy={p.dot[1]} r={p.big ? 4 : 3} fill="#fff" stroke="#55524f" strokeWidth={p.big ? 2 : 1.5} />}
          {p.lines.map((line, i) => (
            <PlaceName key={line} x={p.x} y={p.ys[i]} fontSize={p.size} fontStyle={p.italic ? "italic" : "normal"} fontWeight={p.size > 22 ? 500 : 400}>
              {line}
            </PlaceName>
          ))}
        </g>
      ))}
      <circle cx="867" cy="138" r="5" fill="#fff" stroke="#111" strokeWidth="2" />
      <circle cx="867" cy="138" r="2.500" fill="#111" />
      <g>
        <path d="M578 161H624Q628 161 628 165V210L601 227 574 210V165Q574 161 578 161Z" fill="#777" opacity="0.35" />
        <path d="M578 159H624Q628 159 628 163V208L601 225 574 208V163Q574 159 578 159Z" fill="#fbead4" />
        <g transform="translate(585 172) scale(0.69)"><CityShapes /></g>
      </g>
    </MapDrawing>
  );
}

/* ---------- content ---------- */

const descriptionLines = [
  "Mycenae 'Rich in Gold', the kingdom of mythical Agamemnon, first sung by Homer in his epics, is the most important and richest",
  "palatial centre of the Late Bronze Age in Greece. Its name was given to one of the greatest civilizations of Greek prehistory, the",
  "Mycenaean civilization, while the myths related to its history have inspired poets and writers over many centuries, from the",
  "Homeric epics and the great tragedies of the Classical period to contemporary literary and artistic creation. Perseus, son of Zeus",
  "and Dana?, daughter of Akrisios, king of Argos and descendant of Danaos, is traditionally considered as its mythical founder.",
  "Pausanias (2, 16, 3) reports that Perseus named the new city Mycenae after the pommel (mykes) of his sword, which fell there, or",
];

const summary: [string, string][] = [
  ["Hits", "272"], ["Works", "61"], ["Latitude", "37.7308"], ["Longitude", "22.7561"], ["Confidence", "High"],
];

const details: [string, string][] = [
  ["Greek name", "Μυκῆναι"], ["Place ID", "377228PMyk"], ["Time period", "LACHR"], ["Region", "Peloponnese"],
  ["Country", "Greece"], ["Department", "Argolida"], ["Mod", "Mykines"],
];

const sources: [string, string][] = [["Travelogues", "11512"], ["Pleiades", "570491"], ["DARE", "21929"]];

const passages = [
  { ref: "§2.557", before: "And with these there followed eighty black ships. And they that held ", after: ", the well-built citadel, and wealthy Corinth, and well-built Cleonae, and dwelt" },
  { ref: "§4.20", before: "that are far dearest in my sight, Argos and Sparta and broad-wayed ", after: " ; these do thou lay waste whensoe'er they shall be hateful to" },
  { ref: "§4.349", before: "say that he was pre-eminent over all. Once verily he came to ", after: ", not as an enemy, but as a guest, in company with" },
];

const Facts = ({ items }: { items: [string, string][] }) => (
  <>
    {items.map(([name, value]) => (
      <Fact key={name}><b>{name}:</b> {value}</Fact>
    ))}
  </>
);

const navItems: React.ReactNode[] = [
  <NavLink href="#home" $active>Home</NavLink>,
  <NavLink href="#about"><span>About T<Small>T</Small></span><Caret /></NavLink>,
  <NavLink href="#texts">Ancient Texts</NavLink>,
  <NavLink href="#places">Places</NavLink>,
  <NavLink href="#people">People</NavLink>,
];

export default function App() {
  return (
    <>
      <GlobalStyle />
      <Header>
        <Logo href="#home">
          <LogoTopos>TOPOS</LogoTopos>
          <LogoText>TEXT</LogoText>
        </Logo>
        <Nav>
          {navItems.map((item, i) => (
            <React.Fragment key={i}>
              {item}
              <span>|</span>
            </React.Fragment>
          ))}
        </Nav>
      </Header>

      <MapBox>
        <AegeanMap />
        <MapCredit>Map data ©2018 Google</MapCredit>
      </MapBox>

      <Page>
        <TitleRow>
          <div>
            <Title>Mycenae (Argolid) 272 Mykines - <GreekTitle>Μυκήναι</GreekTitle></Title>
            <Subtitle>Μυκῆναι - Mycenae, important Bronze Age citadel and Archaic/Classical polis at Mykenes in Argolid Peloponnese</Subtitle>
          </div>
          <Kind>
            <svg width="48" height="40" viewBox="0 0 48 40" aria-hidden="true"><CityShapes /></svg>
            POLIS
          </Kind>
        </TitleRow>

        <Columns>
          <Sidebar>
            <Card><Facts items={summary} /></Card>
            <Card><Facts items={details} /></Card>
            <Card>
              <Fact><b>Source:</b></Fact>
              <Fact>http://pleiades.stoa.org/places/570491</Fact>
              {sources.map(([name, id]) => (
                <Fact key={name}><b>{name}:</b> <a href={`#${id}`}>{id}</a></Fact>
              ))}
            </Card>
            <Card>
              Read summary reports on the recent excavations at <b>Mycenae</b> in Chronique des fouilles online
            </Card>
          </Sidebar>

          <Content>
            <Heading>
              MODERN DESCRIPTION
              <Credit href="#odysseus">
                <svg width="30" height="30" viewBox="0 0 30 30" fill="none" stroke="currentColor" aria-hidden="true">
                  <circle cx="15" cy="15" r="14" strokeWidth="2" />
                  <path d="M20.800 11A7.200 7.200 0 1 0 20.800 19" strokeWidth="3" />
                </svg>
                Odysseus
              </Credit>
            </Heading>
            <Description>
              {descriptionLines.map((line) => <DescriptionLine key={line}>{line}</DescriptionLine>)}
            </Description>
            <MoreLine><a href="#more">Read more...</a></MoreLine>

            <Filters>
              {["Author, Title", "Category", "Type", "Language"].map((name) => (
                <SelectWrap key={name}>
                  <Select aria-label={name}><option>{name}</option></Select>
                  <UpDown />
                </SelectWrap>
              ))}
            </Filters>

            <Tools>
              <ToolLabel $gap={6}>
                Show
                <SelectWrap $narrow>
                  <Select><option>20</option></Select>
                  <UpDown />
                </SelectWrap>
                entries
              </ToolLabel>
              <ToolLabel $gap={12}>
                Search:
                <SearchInput type="search" />
              </ToolLabel>
            </Tools>

            <Table>
              <colgroup>
                <Col $width={151} /><Col /><Col $width={107} /><Col $width={97} />
              </colgroup>
              <thead>
                <tr>
                  <Th>Author, Title</Th>
                  <Th>Text</Th>
                  <Th $center>Date<SortIcon /></Th>
                  <Th $center>Full</Th>
                </tr>
              </thead>
              <tbody>
                {passages.map((p) => (
                  <Row key={p.ref}>
                    <Td>Homer, the Iliad</Td>
                    <Td>{p.ref}{"\u00a0 "}{p.before}<b>Mycenae</b>{p.after}</Td>
                    <Td $center>-1000</Td>
                    <Td $center><a href={`#${p.ref}`}>Read Text</a></Td>
                  </Row>
                ))}
              </tbody>
            </Table>
          </Content>
        </Columns>
      </Page>
    </>
  );
}
